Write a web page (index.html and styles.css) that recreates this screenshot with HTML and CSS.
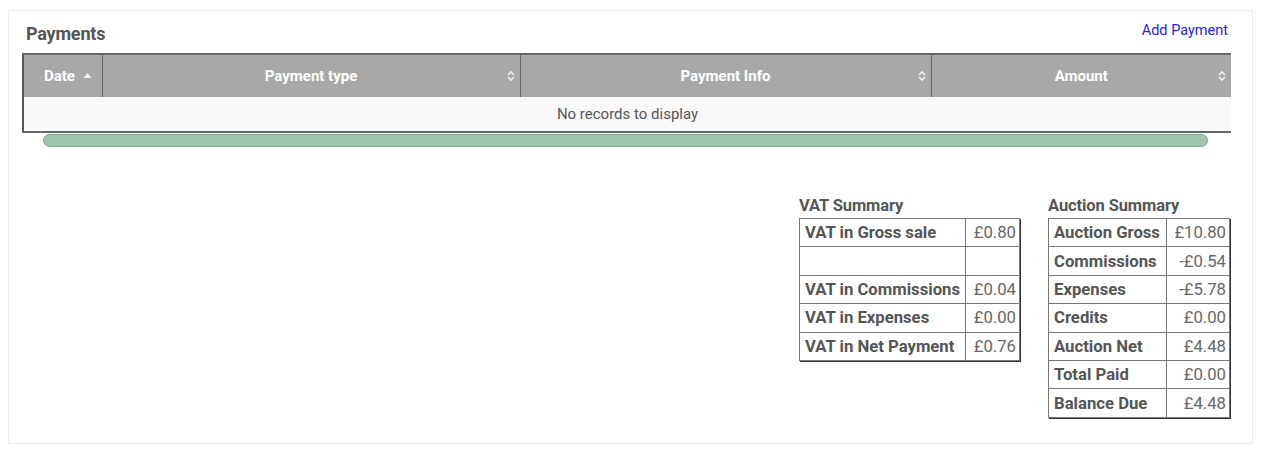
FILE: index.html
```html
<!DOCTYPE html>
<html lang="en">
<head>
    <meta charset="UTF-8">
    <meta name="viewport" content="width=device-width, initial-scale=1.0">
    <title>Payments</title>
    <link rel="stylesheet" href="styles.css">
</head>
<body>
    <div class="panel">
        <div class="panel-head">
            <h2>Payments</h2>
            <a href="#" class="add-link">Add Payment</a>
        </div>

        <table class="grid">
            <thead>
                <tr>
                    <th class="col-date">Date <svg class="sort-up" viewBox="0 0 10 6"><path d="M0 6 L5 0 L10 6 Z" /></svg></th>
                    <th class="col-type">Payment type
                        <svg class="sort" viewBox="0 0 10 14"><path d="M2 6 L5 3 L8 6 M2 8 L5 11 L8 8" /></svg>
                    </th>
                    <th class="col-info">Payment Info
                        <svg class="sort" viewBox="0 0 10 14"><path d="M2 6 L5 3 L8 6 M2 8 L5 11 L8 8" /></svg>
                    </th>
                    <th class="col-amount">Amount
                        <svg class="sort" viewBox="0 0 10 14"><path d="M2 6 L5 3 L8 6 M2 8 L5 11 L8 8" /></svg>
                    </th>
                </tr>
            </thead>
            <tbody>
                <tr>
                    <td colspan="4" class="empty">No records to display</td>
                </tr>
            </tbody>
        </table>
        <div class="scrollbar"></div>

        <div class="summaries">
            <div class="summary">
                <h3>VAT Summary</h3>
                <table class="sum-table vat">
                    <tr><th>VAT in Gross sale</th><td>£0.80</td></tr>
                    <tr><th></th><td></td></tr>
                    <tr><th>VAT in Commissions</th><td>£0.04</td></tr>
                    <tr><th>VAT in Expenses</th><td>£0.00</td></tr>
                    <tr><th>VAT in Net Payment</th><td>£0.76</td></tr>
                </table>
            </div>
            <div class="summary">
                <h3>Auction Summary</h3>
                <table class="sum-table auction">
                    <tr><th>Auction Gross</th><td>£10.80</td></tr>
                    <tr><th>Commissions</th><td>-£0.54</td></tr>
                    <tr><th>Expenses</th><td>-£5.78</td></tr>
                    <tr><th>Credits</th><td>£0.00</td></tr>
                    <tr><th>Auction Net</th><td>£4.48</td></tr>
                    <tr><th>Total Paid</th><td>£0.00</td></tr>
                    <tr><th>Balance Due</th><td>£4.48</td></tr>
                </table>
            </div>
        </div>
    </div>
</body>
</html>
```

FILE: styles.css
```css
* {
    margin: 0;
    padding: 0;
    box-sizing: border-box;
    font-family: Roboto, 'Liberation Sans', sans-serif;
}

body {
    background: #fff;
    padding: 10px 15px 0 8px;
}

.panel {
    border: 1px solid #ececec;
    padding: 11px 21px 24px 13px;
    height: 434px;
}

.panel-head {
    display: flex;
    justify-content: space-between;
    align-items: flex-start;
    margin-bottom: 8px;
}

h2 {
    font-size: 18px;
    font-weight: bold;
    color: #555;
    padding: 1px 0 0 4px;
    line-height: 22px;
    letter-spacing: -0.2px;
}

.add-link {
    font-size: 14.5px;
    color: #2626c9;
    text-decoration: none;
    padding-top: 0;
    margin-right: 3px;
}

/* payments grid */
.grid {
    width: 1209px;
    border-collapse: collapse;
    border-left: 2px solid #555;
    border-top: 2px solid #666;
}

.grid thead th {
    background: #a8a8a8;
    color: #fff;
    font-size: 15px;
    font-weight: bold;
    height: 43px;
    position: relative;
    text-align: center;
    border-right: 1px solid #666;
}

.grid thead th:last-child {
    border-right: none;
}

.col-date { width: 79px; }
.col-type { width: 418px; }
.col-info { width: 411px; }

.grid thead th.col-date {
    padding-left: 10px;
}

.sort-up {
    width: 9px;
    height: 5px;
    margin-left: 4px;
    vertical-align: 3px;
    fill: #eee;
}

.sort {
    position: absolute;
    right: 4px;
    top: 14px;
    width: 10px;
    height: 14px;
    fill: none;
    stroke: #eee;
    stroke-width: 1.7;
}

.grid .empty {
    background: #f9f9f9;
    height: 35px;
    text-align: center;
    font-size: 15px;
    color: #555;
    border-bottom: 2px solid #666;
}

.scrollbar {
    height: 13px;
    margin: 1px 23px 0 21px;
    background: #9cc6ae;
    border: 1px solid #7ea893;
    border-radius: 7px;
}

/* summary tables */
.summaries {
    display: flex;
    justify-content: flex-end;
    gap: 28px;
    margin-top: 49px;
    margin-right: 1px;
}

h3 {
    font-size: 16.5px;
    font-weight: bold;
    color: #555;
    line-height: 20px;
    margin-bottom: 2px;
    letter-spacing: -0.1px;
}

.sum-table {
    border-collapse: collapse;
    border: 1px solid #777;
    box-shadow: 1px 1px 0 #333;
}

.sum-table th,
.sum-table td {
    border: 1px solid #777;
    height: 28.4px;
    font-size: 16.7px;
    color: #555;
    padding: 0 5px;
    white-space: nowrap;
}

.sum-table th {
    text-align: left;
    font-weight: bold;
}

.sum-table td {
    text-align: right;
    color: #666;
    padding: 0 3px 0 4px;
}

.vat th { width: 165px; }
.vat td { width: 54px; }
.auction th { width: 118px; }
.auction td { width: 63px; }
```
